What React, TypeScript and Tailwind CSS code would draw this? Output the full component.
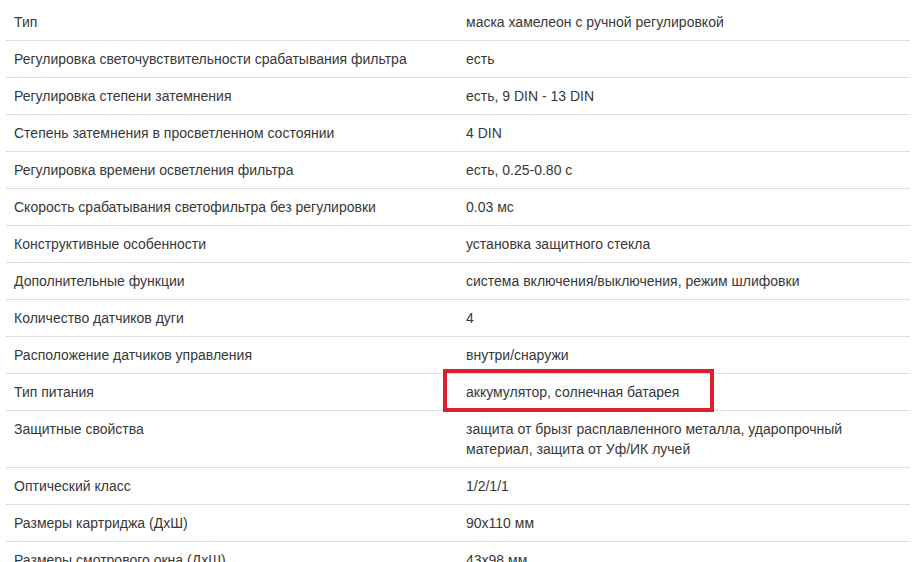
const SPECS: [string, string][] = [
  ['Тип', 'маска хамелеон с ручной регулировкой'],
  ['Регулировка светочувствительности срабатывания фильтра', 'есть'],
  ['Регулировка степени затемнения', 'есть, 9 DIN - 13 DIN'],
  ['Степень затемнения в просветленном состоянии', '4 DIN'],
  ['Регулировка времени осветления фильтра', 'есть, 0.25-0.80 с'],
  ['Скорость срабатывания светофильтра без регулировки', '0.03 мс'],
  ['Конструктивные особенности', 'установка защитного стекла'],
  ['Дополнительные функции', 'система включения/выключения, режим шлифовки'],
  ['Количество датчиков дуги', '4'],
  ['Расположение датчиков управления', 'внутри/снаружи'],
  ['Тип питания', 'аккумулятор, солнечная батарея'],
  ['Защитные свойства', 'защита от брызг расплавленного металла, ударопрочный материал, защита от Уф/ИК лучей'],
  ['Оптический класс', '1/2/1/1'],
  ['Размеры картриджа (ДхШ)', '90x110 мм'],
  ['Размеры смотрового окна (ДхШ)', '43x98 мм'],
];

export default function App() {
  return (
    <div
      className="relative w-[916px] h-[562px] overflow-hidden bg-white text-[14px] leading-[20px] text-[#383838]"
      style={{ fontFamily: '"Liberation Sans", Arial, sans-serif' }}
    >
      <div className="pt-[4px] pl-[6px] w-[910px]">
        {SPECS.map(([name, value]) => (
          <div key={name} className="flex border-b border-[#dedede]">
            <div className="w-[452px] shrink-0 px-2 py-2">{name}</div>
            <div className="w-[452px] shrink-0 px-2 py-2">{value}</div>
          </div>
        ))}
      </div>

      {/* highlight box */}
      <div className="absolute left-[443px] top-[369px] w-[271px] h-[43px] border-[4px] border-[#dc1f2b]" />
    </div>
  );
}
